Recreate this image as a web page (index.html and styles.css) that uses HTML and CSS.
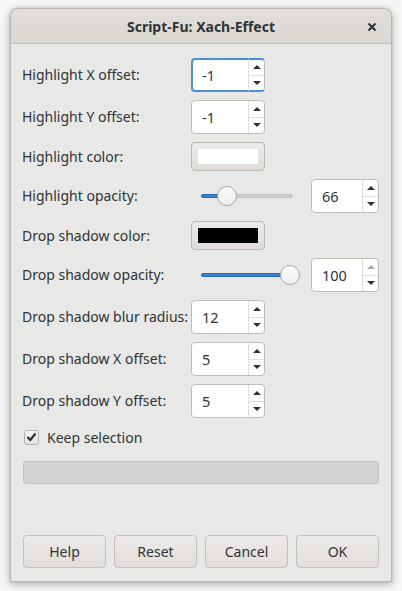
FILE: index.html
```html
<!DOCTYPE html>
<html>
<head>
<meta charset="utf-8">
<link rel="stylesheet" href="styles.css">
</head>
<body>
<div class="window">
  <div class="titlebar">
    <span class="title">Script-Fu: Xach-Effect</span>
    <svg class="close" width="10" height="10" viewBox="0 0 10 10"><path d="M1.5 1.5 L8.5 8.5 M8.5 1.5 L1.5 8.5" stroke="#2e3436" stroke-width="2" stroke-linecap="butt"/></svg>
  </div>
  <div class="content">
    <div class="grid">
      <div class="label">Highlight X offset:</div>
      <div class="ctrl">
        <div class="spin focus"><span class="val">-1</span><span class="btns"><span class="up"></span><span class="down"></span></span></div>
      </div>

      <div class="label">Highlight Y offset:</div>
      <div class="ctrl">
        <div class="spin"><span class="val">-1</span><span class="btns"><span class="up"></span><span class="down"></span></span></div>
      </div>

      <div class="label">Highlight color:</div>
      <div class="ctrl">
        <div class="colorbtn"><span class="swatch white"></span></div>
      </div>

      <div class="label">Highlight opacity:</div>
      <div class="ctrl">
        <div class="slider"><div class="track"><div class="fill" style="width:25px"></div><div class="knob" style="left:15px"></div></div></div>
        <div class="spin small"><span class="val">66</span><span class="btns"><span class="up"></span><span class="down"></span></span></div>
      </div>

      <div class="label">Drop shadow color:</div>
      <div class="ctrl">
        <div class="colorbtn"><span class="swatch black"></span></div>
      </div>

      <div class="label">Drop shadow opacity:</div>
      <div class="ctrl">
        <div class="slider"><div class="track"><div class="fill" style="width:88px"></div><div class="knob" style="left:78px"></div></div></div>
        <div class="spin small"><span class="val">100</span><span class="btns"><span class="up disabled"></span><span class="down"></span></span></div>
      </div>

      <div class="label">Drop shadow blur radius:</div>
      <div class="ctrl">
        <div class="spin"><span class="val">12</span><span class="btns"><span class="up"></span><span class="down"></span></span></div>
      </div>

      <div class="label">Drop shadow X offset:</div>
      <div class="ctrl">
        <div class="spin"><span class="val">5</span><span class="btns"><span class="up"></span><span class="down"></span></span></div>
      </div>

      <div class="label">Drop shadow Y offset:</div>
      <div class="ctrl">
        <div class="spin"><span class="val">5</span><span class="btns"><span class="up"></span><span class="down"></span></span></div>
      </div>
    </div>

    <div class="check">
      <span class="box"><svg width="11" height="10" viewBox="0 0 11 10"><path d="M1.5 5 L4.3 8 L9.5 1.5" fill="none" stroke="#2e3436" stroke-width="2.2"/></svg></span>
      <span class="checklabel">Keep selection</span>
    </div>

    <div class="progress"></div>

    <div class="buttons">
      <div class="btn">Help</div>
      <div class="btn">Reset</div>
      <div class="btn">Cancel</div>
      <div class="btn">OK</div>
    </div>
  </div>
</div>
</body>
</html>
```

FILE: styles.css
```css
* { box-sizing: border-box; }
html, body { margin: 0; padding: 0; }
body {
  background: #f6f6f6;
  font-family: "Noto Sans", "DejaVu Sans", sans-serif;
  font-size: 14px;
  color: #2e3436;
  width: 402px;
  height: 591px;
  overflow: hidden;
}
.window {
  margin: 8px 0 0 10px;
  width: 382px;
  height: 574px;
  border: 1px solid #b9b6b2;
  border-radius: 8px 8px 0 0;
  background: #e8e8e7;
  box-shadow: 0 2px 8px rgba(0,0,0,0.30), 0 0 2px rgba(0,0,0,0.15);
  display: flex;
  flex-direction: column;
}
.titlebar {
  height: 35px;
  flex: none;
  background: linear-gradient(#e1deda, #dcd9d5);
  border-bottom: 1px solid #bfbbb7;
  border-radius: 7px 7px 0 0;
  display: flex;
  align-items: center;
  justify-content: center;
  position: relative;
}
.title {
  font-weight: bold;
  font-size: 14px;
  color: #2e3436;
}
.close {
  position: absolute;
  right: 14px;
  top: 13px;
}
.content {
  flex: 1;
  display: flex;
  flex-direction: column;
  padding: 14px 12px 13px 12px;
}
.grid {
  display: grid;
  grid-template-columns: 168px 1fr;
  row-gap: 8px;
  align-items: center;
}
.label {
  margin-left: -1px;
  white-space: nowrap;
  line-height: 18px;
}
.ctrl {
  display: flex;
  align-items: center;
}
.spin {
  width: 74px;
  height: 34px;
  background: #fff;
  border: 1px solid #c0bdb9;
  border-radius: 4px;
  display: flex;
  align-items: stretch;
}
.spin.focus {
  border: 2px solid #4a90d9;
  border-right: 1px solid #c0bdb9;
}
.spin.small { width: 68px; }
.val {
  flex: 1;
  display: flex;
  align-items: center;
  padding-left: 10px;
  font-size: 14.5px;
}
.spin.focus .val { padding-left: 9px; }
.btns {
  width: 16px;
  flex: none;
  border-left: 1px solid #e0dedc;
  display: flex;
  flex-direction: column;
}
.spin.focus .btns { margin: -1px 0; }
.btns span {
  flex: 1;
  display: flex;
  align-items: center;
  justify-content: center;
}
.btns .up { border-bottom: 1px solid #e0dedc; }
.btns .up::before {
  content: "";
  border-left: 4px solid transparent;
  border-right: 4px solid transparent;
  border-bottom: 4px solid #2e3436;
}
.btns .down::before {
  content: "";
  border-left: 4px solid transparent;
  border-right: 4px solid transparent;
  border-top: 4px solid #2e3436;
}
.btns .up.disabled::before { border-bottom-color: #a9abab; }
.colorbtn {
  width: 74px;
  height: 29px;
  border: 1px solid #bdb8b3;
  border-radius: 4px;
  background: linear-gradient(#edebe9, #dfdcd9);
  padding: 6px;
  display: flex;
}
.swatch {
  flex: 1;
  display: block;
}
.swatch.white { background: #fff; }
.swatch.black { background: #000; }
.slider {
  width: 120px;
  height: 34px;
  display: flex;
  align-items: center;
  padding-left: 10px;
}
.track {
  position: relative;
  width: 92px;
  height: 4px;
  background: #cfcfcc;
  border: 1px solid #c3c1be;
  border-radius: 2px;
}
.fill {
  position: absolute;
  left: -1px;
  top: -1px;
  height: 4px;
  background: #3c7fcc;
  border: 1px solid #2a69b5;
  border-radius: 2px;
}
.knob {
  position: absolute;
  top: -9px;
  width: 20px;
  height: 20px;
  border-radius: 50%;
  border: 1px solid #a9a6a2;
  background: linear-gradient(#fbfbfb, #efeeed);
}
.check {
  display: flex;
  align-items: center;
  margin-top: 10px;
  height: 18px;
  gap: 8px;
  padding-left: 1px;
}
.box {
  width: 15px;
  height: 15px;
  border: 1px solid #b6b2ae;
  border-radius: 3px;
  background: linear-gradient(#f4f3f2, #e6e4e2);
  display: flex;
  align-items: center;
  justify-content: center;
}
.progress {
  margin-top: 15px;
  height: 23px;
  background: #d3d2d0;
  border: 1px solid #c2c0bd;
  border-radius: 3px;
}
.buttons {
  margin-top: auto;
  display: grid;
  grid-template-columns: repeat(4, 1fr);
  column-gap: 8px;
}
.btn {
  height: 33px;
  border: 1px solid #c4bfba;
  border-radius: 4px;
  background: linear-gradient(#edebe9, #e0ddda);
  display: flex;
  align-items: center;
  justify-content: center;
}
```
